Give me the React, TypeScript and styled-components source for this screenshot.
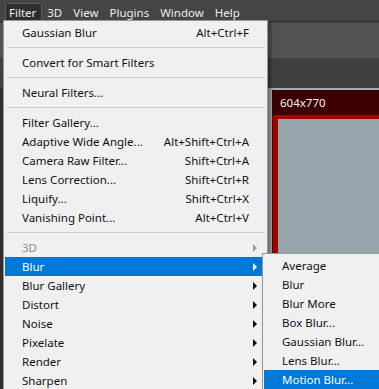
import React from "react"
import styled, { createGlobalStyle, css } from "styled-components"

const GlobalStyle = createGlobalStyle`
  html, body {
    margin: 0;
    padding: 0;
    background: #2b2b2b;
  }
  body {
    font-family: "Noto Sans", "Noto Sans CJK KR", "Liberation Sans", sans-serif;
  }
`

type MenuEntry =
  | { kind: "item"; label: string; shortcut?: string; sub?: boolean; disabled?: boolean; active?: boolean }
  | { kind: "sep" }

const topMenus = ["Filter", "3D", "View", "Plugins", "Window", "Help"]

const filterMenu: MenuEntry[] = [
  { kind: "item", label: "Gaussian Blur", shortcut: "Alt+Ctrl+F" },
  { kind: "sep" },
  { kind: "item", label: "Convert for Smart Filters" },
  { kind: "sep" },
  { kind: "item", label: "Neural Filters..." },
  { kind: "sep" },
  { kind: "item", label: "Filter Gallery..." },
  { kind: "item", label: "Adaptive Wide Angle...", shortcut: "Alt+Shift+Ctrl+A" },
  { kind: "item", label: "Camera Raw Filter...", shortcut: "Shift+Ctrl+A" },
  { kind: "item", label: "Lens Correction...", shortcut: "Shift+Ctrl+R" },
  { kind: "item", label: "Liquify...", shortcut: "Shift+Ctrl+X" },
  { kind: "item", label: "Vanishing Point...", shortcut: "Alt+Ctrl+V" },
  { kind: "sep" },
  { kind: "item", label: "3D", sub: true, disabled: true },
  { kind: "item", label: "Blur", sub: true, active: true },
  { kind: "item", label: "Blur Gallery", sub: true },
  { kind: "item", label: "Distort", sub: true },
  { kind: "item", label: "Noise", sub: true },
  { kind: "item", label: "Pixelate", sub: true },
  { kind: "item", label: "Render", sub: true },
  { kind: "item", label: "Sharpen", sub: true },
]

const blurMenu = [
  "Average",
  "Blur",
  "Blur More",
  "Box Blur...",
  "Gaussian Blur...",
  "Lens Blur...",
  "Motion Blur...",
]

const Screen = styled.div`
  position: relative;
  width: 379px;
  height: 389px;
  overflow: hidden;
  display: flex;
  flex-direction: column;
  background: #2b2b2b;
`

const MenuBar = styled.div`
  height: 20px;
  display: flex;
  align-items: stretch;
  padding: 0 0 0 5px;
  gap: 1px;
  background: #454545;
`

const MenuTitle = styled.div<{ $open?: boolean }>`
  display: flex;
  align-items: center;
  padding: 1px 5px 0 3px;
  margin-top: 3px;
  font-size: 11.5px;
  color: #ececec;
  box-sizing: border-box;
  border: 1px solid transparent;
  border-bottom: none;
  ${(p) =>
    p.$open &&
    css`
      background: #2e2e2e;
      border-color: #5a5a5a;
    `}
`

const OptionsBar = styled.div`
  height: 38px;
  display: flex;
  align-items: center;
  justify-content: flex-end;
  padding-right: 107px;
  box-sizing: border-box;
  background: #535353;
  border-top: 3px solid #3a3a3a;
`

const OptionsField = styled.div`
  width: 60px;
  height: 22px;
  border-radius: 3px;
  background: #5b5b5b;
  border: 1px solid #4a4a4a;
`

const TabStrip = styled.div`
  height: 30px;
  background: #404040;
`

const Workspace = styled.div`
  flex: 1;
  display: flex;
`

const ToolStrip = styled.div`
  width: 40px;
  background: #2f2f2f;
`

const DocArea = styled.div`
  flex: 1;
  display: flex;
  padding: 2px 0 0 232px;
  background: #a3acb2;
`

const DocWindow = styled.div`
  flex: 1;
  display: flex;
  flex-direction: column;
`

const DocTitle = styled.div`
  height: 25px;
  display: flex;
  align-items: center;
  padding-left: 8px;
  font-size: 11.5px;
  color: #f0f0f0;
  background: #3c0000;
`

const DocFrame = styled.div`
  flex: 1;
  display: flex;
  padding: 4px 0 0 5px;
  background: #a30000;
  border-left: 1px solid #5a0000;
`

const Canvas = styled.div`
  flex: 1;
  background: #95a3ab;
`

const Dropdown = styled.div<{ $width: number }>`
  position: absolute;
  left: 3px;
  top: 20px;
  width: ${(p) => p.$width}px;
  box-sizing: border-box;
  padding: 2px 0;
  background: #f0f0f0;
  border: 1px solid #979797;
  box-shadow: 3px 3px 3px rgba(0, 0, 0, 0.35);
  font-size: 11.5px;
  color: #111;
  z-index: 2;
`

const Row = styled.div<{ $active?: boolean; $disabled?: boolean; $pad: number }>`
  position: relative;
  height: 19px;
  display: grid;
  grid-template-columns: 1fr auto 17px;
  align-items: center;
  margin: 0 1px;
  padding-left: ${(p) => p.$pad}px;
  white-space: nowrap;
  color: ${(p) => (p.$disabled ? "#8d8d8d" : "#111")};
  ${(p) =>
    p.$active &&
    css`
      background: #0078d7;
      color: #fff;
    `}
`

const Shortcut = styled.span`
  text-align: right;
`

const ArrowCell = styled.span`
  display: flex;
  align-items: center;
  padding-left: 4px;
`

const Arrow = styled.span<{ $color: string }>`
  width: 0;
  height: 0;
  border-top: 4px solid transparent;
  border-bottom: 4px solid transparent;
  border-left: 4px solid ${(p) => p.$color};
`

const Separator = styled.div`
  height: 11px;
  display: flex;
  align-items: center;
  padding: 0 2px 0 3px;

  &::after {
    content: "";
    flex: 1;
    height: 1px;
    background: #cbcbcb;
  }
`

// the flyout hangs off the highlighted row
const SubMenu = styled(Dropdown)`
  left: 257px;
  top: -4px;
`

function BlurSubmenu() {
  return (
    <SubMenu $width={160}>
      {blurMenu.map((label) => (
        <Row key={label} $pad={18} $active={label === "Motion Blur..."}>
          <span>{label}</span>
        </Row>
      ))}
    </SubMenu>
  )
}

export default function App() {
  return (
    <>
      <GlobalStyle />
      <Screen>
        <MenuBar>
          {topMenus.map((m) => (
            <MenuTitle key={m} $open={m === "Filter"}>
              {m}
            </MenuTitle>
          ))}
        </MenuBar>
        <OptionsBar>
          <OptionsField />
        </OptionsBar>
        <TabStrip />
        <Workspace>
          <ToolStrip />
          <DocArea>
            <DocWindow>
              <DocTitle>604x770</DocTitle>
              <DocFrame>
                <Canvas />
              </DocFrame>
            </DocWindow>
          </DocArea>
        </Workspace>

        <Dropdown $width={265}>
          {filterMenu.map((entry, i) => {
            if (entry.kind === "sep") return <Separator key={i} />
            const arrowColor = entry.active ? "#fff" : entry.disabled ? "#9a9a9a" : "#111"
            return (
              <Row key={i} $pad={17} $active={entry.active} $disabled={entry.disabled}>
                <span>{entry.label}</span>
                <Shortcut>{entry.shortcut}</Shortcut>
                <ArrowCell>{entry.sub && <Arrow $color={arrowColor} />}</ArrowCell>
                {entry.active && <BlurSubmenu />}
              </Row>
            )
          })}
        </Dropdown>
      </Screen>
    </>
  )
}
